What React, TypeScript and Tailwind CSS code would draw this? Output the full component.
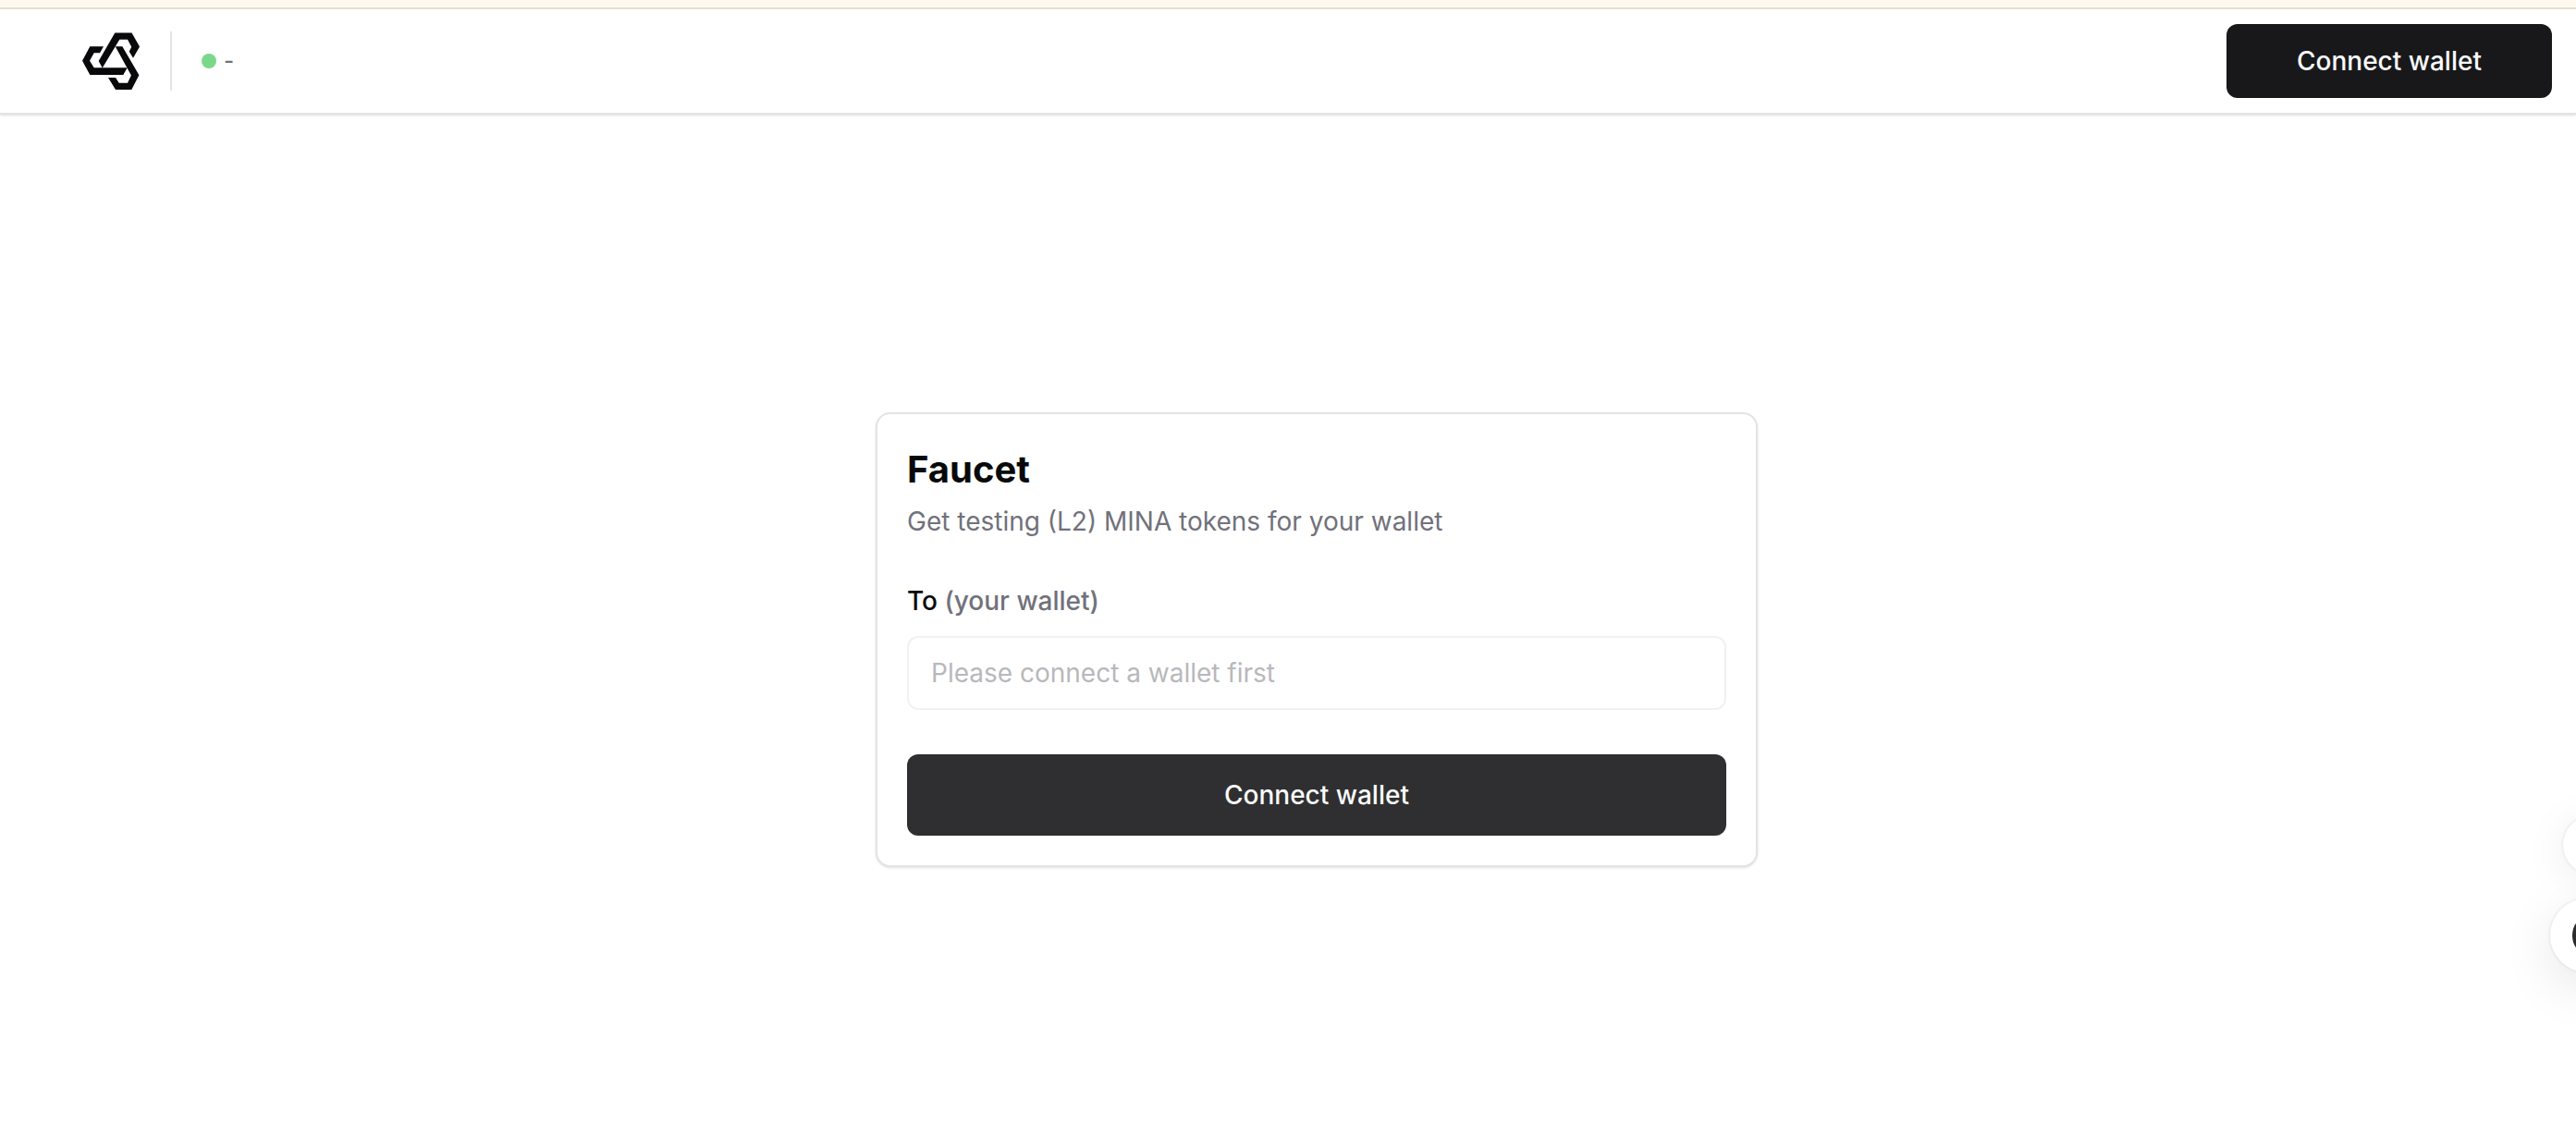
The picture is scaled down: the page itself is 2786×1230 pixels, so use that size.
function Logo() {
  return (
    <svg viewBox="0 0 62 62" className="size-[62px]" fill="#09090b" aria-hidden="true">
      <path d="M35.3 0.5H53.5L62 15.5L55 27.8L50.7 20.7L53.2 15.7L49 7.8H40.3L21.7 38.5L17.7 31Z" />
      <path d="M8.3 15.3H23L19 22.3H12.7L8 30.7L12.7 38.3H48.7L44.3 46H8.3L0 30.7Z" />
      <path d="M35.7 15.3H43.3L61.4 46.3L53.3 62H36L28 49H36L39.7 54.7H49L52.9 46.5Z" />
    </svg>
  );
}

function FloatingTools() {
  return (
    <div className="fixed top-[882px] -right-[52px] flex w-20 flex-col gap-[26px]">
      <button
        type="button"
        aria-label="Open shortcuts"
        className="ml-3.5 size-16 rounded-full bg-white shadow-[0_0_4px_rgba(0,0,0,0.12),0_8px_48px_rgba(0,0,0,0.08)]"
      />
      <button
        type="button"
        aria-label="Open assistant"
        className="flex size-20 items-center justify-center rounded-full bg-white shadow-[0_0_4px_rgba(0,0,0,0.12),0_16px_56px_rgba(0,0,0,0.10)]"
      >
        <svg viewBox="0 0 32 44" className="h-11 w-8" aria-hidden="true">
          <ellipse cx="16" cy="22" rx="16" ry="20" fill="#2b2b2d" />
        </svg>
      </button>
    </div>
  );
}

export default function App() {
  return (
    <div className="flex min-h-screen flex-col overflow-x-hidden bg-white font-['Inter',sans-serif] text-[28px] leading-10 text-zinc-950 [font-optical-sizing:none]">
      <div className="h-2.5 border-b-2 border-[#e7e0d4] bg-[#fef8ee]" />
      <header className="flex items-center justify-between border-b-2 border-zinc-200 bg-white py-4 pr-[26px] pl-[89px] shadow-sm">
        <div className="flex items-center">
          <a href="#" aria-label="Home">
            <Logo />
          </a>
          <div className="ml-[33px] h-16 w-0.5 bg-zinc-200" />
          <div className="ml-8 flex items-center gap-2">
            <span className="size-4 rounded-full bg-[#7bd88b]" />
            <span className="text-2xl leading-8 font-medium text-zinc-500">-</span>
          </div>
        </div>
        <button type="button" className="h-20 w-[352px] rounded-xl bg-zinc-900 font-medium text-zinc-50">
          Connect wallet
        </button>
      </header>
      <main className="flex flex-1 items-center justify-center pt-[30px] pl-[62px]">
        <section className="w-full max-w-[954px] rounded-2xl border-2 border-zinc-200 bg-white p-8 shadow-sm">
          <h1 className="text-[40px] leading-14 font-bold">Faucet</h1>
          <p className="mt-2 text-zinc-500">Get testing (L2) MINA tokens for your wallet</p>
          <form className="mt-[46px] flex flex-col" onSubmit={(e) => e.preventDefault()}>
            <label htmlFor="to" className="font-medium">
              To <span className="text-zinc-500">(your wallet)</span>
            </label>
            <input
              id="to"
              type="text"
              disabled
              placeholder="Please connect a wallet first"
              className="mt-[18px] h-20 rounded-xl border-2 border-[#f1f1f2] bg-white px-6 placeholder:text-[#b8b8bc]"
            />
            <button type="submit" className="mt-12 h-22 rounded-xl bg-[#2f2f31] font-medium text-zinc-50">
              Connect wallet
            </button>
          </form>
        </section>
      </main>
      <FloatingTools />
    </div>
  );
}
